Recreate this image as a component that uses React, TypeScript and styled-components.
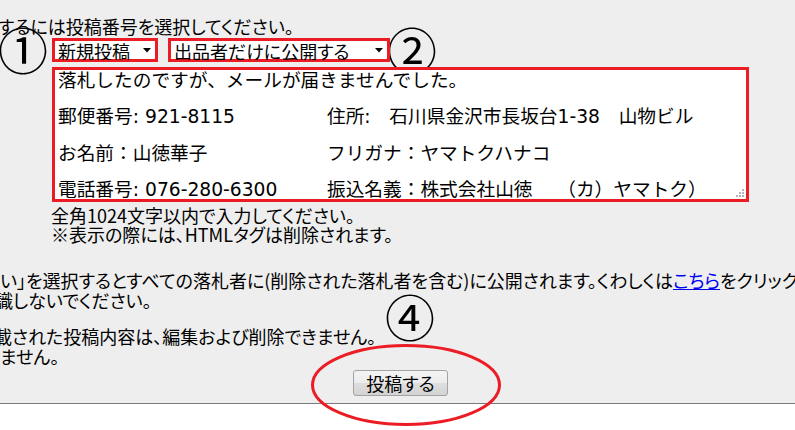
import React from "react";
import styled, { createGlobalStyle } from "styled-components";

const Global = createGlobalStyle`
  html, body {
    margin: 0;
    padding: 0;
    background: #ffffff;
    overflow: hidden;
  }
  body {
    width: 795px;
    height: 430px;
    font-family: "Noto Sans CJK JP", "Noto Sans", sans-serif;
    color: #000;
  }
`;

const Root = styled.div`
  position: relative;
  width: 795px;
  height: 430px;
  overflow: hidden;
`;

const Panel = styled.div`
  box-sizing: border-box;
  height: 404px;
  background: #eeeeee;
  border-bottom: 1px solid #7b7b7b;
  padding-top: 16px;
  display: flex;
  flex-direction: column;
  font-size: 18px;
  line-height: 20px;
  font-feature-settings: "palt";
  white-space: nowrap;
`;

const Line = styled.div<{ $shift?: number; $top?: number; $lh?: number }>`
  margin-left: ${(p) => p.$shift ?? 0}px;
  margin-top: ${(p) => p.$top ?? 0}px;
  line-height: ${(p) => p.$lh ?? 20}px;
  height: ${(p) => p.$lh ?? 20}px;
`;

const Controls = styled.div`
  display: flex;
  align-items: center;
  height: 24px;
  margin-top: 2px;
`;

const Circled = styled.span`
  display: inline-block;
  width: 50px;
  height: 24px;
  margin-top: -5px;
  font-size: 50px;
  line-height: 24px;
  text-align: center;
  font-feature-settings: normal;
`;

const FirstMark = styled(Circled)`
  margin-left: -2px;
  margin-right: 4px;
`;

const RedFrame = styled.div<{ $w: number }>`
  position: relative;
  box-sizing: border-box;
  width: ${(p) => p.$w}px;
  height: 24px;
  border: 3px solid #ec1c24;
  background: #ffffff;
`;

const Select = styled.select`
  appearance: none;
  -webkit-appearance: none;
  box-sizing: border-box;
  width: 100%;
  height: 18px;
  border: none;
  outline: none;
  margin: 0;
  padding: 0 0 0 3px;
  background: transparent;
  font-family: "Noto Sans CJK JP", sans-serif;
  font-size: 18px;
  line-height: 18px;
  font-feature-settings: "palt";
  color: #000;
`;

const Caret = styled.svg`
  position: absolute;
  right: 4px;
  top: 7px;
  pointer-events: none;
`;

const SecondSelect = styled(RedFrame)`
  margin-left: 10px;
`;

const SecondMark = styled(Circled)`
  margin-left: -3px;
`;

const TextBox = styled.div`
  position: relative;
  box-sizing: border-box;
  margin-top: 5px;
  margin-left: 52px;
  width: 697px;
  height: 135px;
  border: 3px solid #ec1c24;
  background: #ffffff;
  padding: 2px 0 0 3px;
  font-family: "DejaVu Sans", "Noto Sans CJK JP", sans-serif;
  font-size: 18.7px;
  line-height: 18px;
  font-feature-settings: normal;
  display: flex;
  flex-direction: column;
  gap: 18.3px;
  overflow: hidden;
`;

const FieldRow = styled.div`
  display: grid;
  grid-template-columns: 269px auto;
`;

const Grip = styled.svg`
  position: absolute;
  right: 1px;
  bottom: 1px;
`;

const Notes = styled.div`
  margin-left: 51px;
  margin-top: 4px;
  line-height: 19px;
`;

const Link = styled.a`
  color: #0000ee;
  text-decoration: underline;
`;

const PostButton = styled.button`
  box-sizing: border-box;
  margin-top: 4px;
  margin-left: 353px;
  width: 95px;
  height: 26px;
  border: 1px solid #a3a3a3;
  border-radius: 3px;
  background: linear-gradient(#f4f4f4 0%, #ececec 48%, #dedede 52%, #d3d3d3 100%);
  font-family: "Noto Sans CJK JP", sans-serif;
  font-size: 18px;
  line-height: 22px;
  font-feature-settings: "palt";
  color: #000;
  padding: 0;
`;

const FourthMark = styled.span`
  position: absolute;
  left: 385px;
  top: 290px;
  width: 50px;
  text-align: center;
  font-size: 50px;
  line-height: 50px;
`;

const Ellipse = styled.svg`
  position: absolute;
  left: 310px;
  top: 343px;
  pointer-events: none;
`;

const caret = (
  <Caret width="8" height="5" viewBox="0 0 8 5">
    <path d="M0 0 H8 L4 4.5 Z" fill="#000" />
  </Caret>
);

export default function App() {
  return (
    <Root>
      <Global />
      <Panel>
        <Line $shift={-2}>するには投稿番号を選択してください。</Line>
        <Controls>
          <FirstMark>①</FirstMark>
          <RedFrame $w={106}>
            <Select defaultValue="new">
              <option value="new">新規投稿</option>
            </Select>
            {caret}
          </RedFrame>
          <SecondSelect $w={222}>
            <Select defaultValue="seller">
              <option value="seller">出品者だけに公開する</option>
            </Select>
            {caret}
          </SecondSelect>
          <SecondMark>②</SecondMark>
        </Controls>
        <TextBox>
          <div>落札したのですが、メールが届きませんでした。</div>
          <FieldRow>
            <span>郵便番号: 921-8115</span>
            <span>住所:　石川県金沢市長坂台1-38　山物ビル</span>
          </FieldRow>
          <FieldRow>
            <span>お名前：山徳華子</span>
            <span>フリガナ：ヤマトクハナコ</span>
          </FieldRow>
          <FieldRow>
            <span>電話番号: 076-280-6300</span>
            <span>振込名義：株式会社山徳　 （カ）ヤマトク）</span>
          </FieldRow>
          <Grip width="9" height="9" viewBox="0 0 9 9">
            <g fill="#b5b5b5">
              <rect x="6" y="0" width="2" height="2" />
              <rect x="3" y="3" width="2" height="2" />
              <rect x="6" y="3" width="2" height="2" />
              <rect x="0" y="6" width="2" height="2" />
              <rect x="3" y="6" width="2" height="2" />
              <rect x="6" y="6" width="2" height="2" />
            </g>
          </Grip>
        </TextBox>
        <Notes>
          <div>全角1024文字以内で入力してください。</div>
          <div>※表示の際には、HTMLタグは削除されます。</div>
        </Notes>
        <Line $top={26}>
          い」を選択するとすべての落札者に(削除された落札者を含む)に公開されます。くわしくは
          <Link href="#">こちら</Link>をクリックしてください。
        </Line>
        <Line $shift={-5}>識しないでください。</Line>
        <Line $shift={-6} $top={16}>載された投稿内容は、編集および削除できません。</Line>
        <Line>ません。</Line>
        <PostButton type="button">投稿する</PostButton>
      </Panel>
      <FourthMark>④</FourthMark>
      <Ellipse width="194" height="84" viewBox="0 0 194 84">
        <ellipse cx="96" cy="42" rx="93.5" ry="39.5" fill="none" stroke="#ec1c24" strokeWidth="3" />
      </Ellipse>
    </Root>
  );
}
